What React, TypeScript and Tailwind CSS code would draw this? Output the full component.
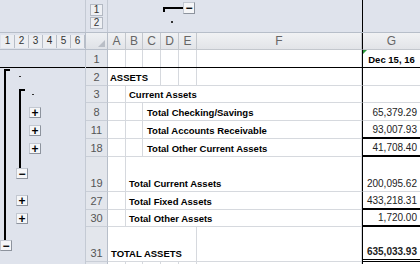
import React from 'react';

type Cell = { w: number; text?: string; cls?: string };
type RowDef = { n: string; h: number; cells: Cell[]; g?: string; gCls?: string; last?: boolean };

const PANE = 'bg-[#dfe3ec]';
const GRID = 'border-[#d6d9de]';

const OutlineBtn: React.FC<{ sign: string; className?: string }> = ({ sign, className }) => (
  <div
    className={`absolute w-[12px] h-[11px] bg-[#f5f6f8] border border-[#c3c8d1] border-r-[#8d939d] border-b-[#8d939d] flex items-center justify-center text-[12px] font-bold leading-none text-black ${className ?? ''}`}
  >
    {sign}
  </div>
);

const rows: RowDef[] = [
  {
    n: '2',
    h: 18,
    cells: [
      { w: 53, text: 'ASSETS', cls: 'pl-[2px]' },
      { w: 18 },
      { w: 18 },
      { w: 165 },
    ],
  },
  {
    n: '3',
    h: 17,
    cells: [{ w: 18 }, { w: 236, text: 'Current Assets', cls: 'pl-[3px]' }],
  },
  {
    n: '8',
    h: 18,
    cells: [{ w: 18 }, { w: 17 }, { w: 219, text: 'Total Checking/Savings', cls: 'pl-[4px]' }],
    g: '65,379.29',
  },
  {
    n: '11',
    h: 18,
    cells: [{ w: 18 }, { w: 17 }, { w: 219, text: 'Total Accounts Receivable', cls: 'pl-[4px]' }],
    g: '93,007.93',
    gCls: 'border-b-2 border-b-black',
  },
  {
    n: '18',
    h: 18,
    cells: [{ w: 18 }, { w: 17 }, { w: 219, text: 'Total Other Current Assets', cls: 'pl-[4px]' }],
    g: '41,708.40',
    gCls: 'border-b-2 border-b-black',
  },
  {
    n: '19',
    h: 35,
    cells: [{ w: 18 }, { w: 236, text: 'Total Current Assets', cls: 'pl-[3px]' }],
    g: '200,095.62',
  },
  {
    n: '27',
    h: 18,
    cells: [{ w: 18 }, { w: 236, text: 'Total Fixed Assets', cls: 'pl-[3px]' }],
    g: '433,218.31',
    gCls: 'border-b-2 border-b-black',
  },
  {
    n: '30',
    h: 17,
    cells: [{ w: 18 }, { w: 236, text: 'Total Other Assets', cls: 'pl-[3px]' }],
    g: '1,720.00',
    gCls: 'border-b-2 border-b-black',
  },
  {
    n: '31',
    h: 35,
    cells: [{ w: 89, text: 'TOTAL ASSETS', cls: 'pl-[3px]' }, { w: 165 }],
    g: '635,033.93',
    gCls: 'border-b-[3px] border-double border-b-black font-bold',
  },
  {
    n: '32',
    h: 12,
    cells: [{ w: 18 }, { w: 17 }, { w: 18 }, { w: 18 }, { w: 18 }, { w: 165 }],
    last: true,
  },
];

const colHeads = [
  { l: 'A', w: 18 },
  { l: 'B', w: 17 },
  { l: 'C', w: 18 },
  { l: 'D', w: 18 },
  { l: 'E', w: 18 },
  { l: 'F', w: 165 },
];

export default function App() {
  return (
    <div className="relative w-[420px] h-[264px] overflow-hidden bg-white font-['Liberation_Sans',Arial,sans-serif] text-black">
      {/* column outline bar */}
      <div className="flex h-[33px] border-b border-[#b7bec9]">
        <div className={`w-[86px] ${PANE} border-r border-[#c4cad4]`} />
        <div className={`w-[22px] ${PANE} border-r border-[#c4cad4] flex flex-col items-center pt-[4px] gap-[1px]`}>
          {['1', '2'].map((l) => (
            <div
              key={l}
              className="w-[13px] h-[12px] bg-[#eef0f4] border border-[#b3b9c3] flex items-center justify-center text-[10px] leading-none text-[#333]"
            >
              {l}
            </div>
          ))}
        </div>
        <div className={`relative w-[254px] ${PANE}`}>
          <div className="absolute left-[55px] top-[7px] w-[20px] h-[2px] bg-black" />
          <div className="absolute left-[55px] top-[7px] w-[2px] h-[5px] bg-black" />
          <OutlineBtn sign="−" className="left-[75px] top-[2px] h-[12px]" />
          <div className="absolute left-[63px] top-[21px] w-[2px] h-[2px] bg-[#333]" />
        </div>
        <div className={`w-[58px] ${PANE} border-l border-black`} />
      </div>

      {/* column headers */}
      <div className="flex h-[17px]">
        <div className={`w-[86px] ${PANE} border-r border-b border-[#b7bec9] flex items-center pl-[1px]`}>
          {['1', '2', '3', '4', '5', '6'].map((l) => (
            <div
              key={l}
              className="w-[14px] h-[13px] bg-[#eceef2] border-r border-[#b8bec8] flex items-center justify-center text-[10px] leading-none text-[#333]"
            >
              {l}
            </div>
          ))}
        </div>
        <div className="relative w-[22px] bg-gradient-to-b from-[#eef0f3] to-[#dfe2e7] border-r border-b border-[#b7bec9]">
          <div className="absolute right-[2px] bottom-[2px] w-0 h-0 border-l-[7px] border-l-transparent border-b-[7px] border-b-[#b9bec6]" />
        </div>
        {colHeads.map((c) => (
          <div
            key={c.l}
            style={{ width: c.w }}
            className="shrink-0 bg-gradient-to-b from-[#f1f2f4] to-[#e2e4e8] border-r border-b border-[#c3c7cd] flex items-center justify-center text-[12px] text-[#666]"
          >
            {c.l}
          </div>
        ))}
        <div className="w-[58px] shrink-0 bg-gradient-to-b from-[#f1f2f4] to-[#e2e4e8] border-l border-b border-black border-b-[#c3c7cd] flex items-center justify-center text-[12px] text-[#666]">
          G
        </div>
      </div>

      {/* body */}
      <div className="flex">
        <div className={`relative w-[86px] shrink-0 ${PANE} border-r border-[#c4cad4]`}>
          <div className="h-[18px] border-b border-black" />
          <div className="absolute left-[4px] top-[19px] w-[2px] h-[171px] bg-black" />
          <div className="absolute left-[4px] top-[19px] w-[6px] h-[2px] bg-black" />
          <div className="absolute left-[19px] top-[26px] w-[2px] h-[1px] bg-[#333]" />
          <div className="absolute left-[19px] top-[39px] w-[2px] h-[79px] bg-black" />
          <div className="absolute left-[19px] top-[39px] w-[6px] h-[2px] bg-black" />
          <div className="absolute left-[32px] top-[44px] w-[2px] h-[1px] bg-[#333]" />
          <OutlineBtn sign="+" className="left-[29px] top-[57px]" />
          <OutlineBtn sign="+" className="left-[29px] top-[75px]" />
          <OutlineBtn sign="+" className="left-[29px] top-[93px]" />
          <OutlineBtn sign="−" className="left-[16px] top-[118px]" />
          <OutlineBtn sign="+" className="left-[16px] top-[145px]" />
          <OutlineBtn sign="+" className="left-[16px] top-[163px]" />
          <OutlineBtn sign="−" className="left-[0px] top-[190px]" />
        </div>

        <div className="flex flex-col">
          {/* row 1 */}
          <div className="flex h-[18px] border-b border-black">
            <div className="w-[22px] shrink-0 bg-[#e3e6ec] border-r border-[#b7bec9] flex items-end justify-center pb-[1px] text-[11px] leading-[13px] text-[#555]">
              1
            </div>
            {[18, 17, 18, 18, 18, 165].map((w, i) => (
              <div key={i} style={{ width: w }} className={`shrink-0 border-r ${GRID}`} />
            ))}
            <div className="relative w-[58px] shrink-0 border-l border-black border-b border-b-black -mb-[1px] flex items-end justify-center pb-[1px] text-[9.5px] leading-[12px] font-bold">
              <div className="absolute left-0 top-0 w-0 h-0 border-t-[4px] border-t-[#2d9a3c] border-r-[4px] border-r-transparent" />
              Dec 15, 16
            </div>
          </div>

          {rows.map((r) => (
            <div key={r.n} style={{ height: r.h }} className="flex shrink-0">
              <div
                className={`w-[22px] shrink-0 bg-[#e3e6ec] border-r border-b border-[#b7bec9] border-b-[#c9ced7] flex items-end justify-center pb-[1px] text-[11px] leading-[13px] text-[#555]`}
              >
                {r.last ? '' : r.n}
              </div>
              {r.cells.map((c, i) => (
                <div
                  key={i}
                  style={{ width: c.w }}
                  className={`shrink-0 border-r border-b ${GRID} flex items-end pb-[1px] text-[9.5px] leading-[12px] font-bold whitespace-nowrap ${c.cls ?? ''}`}
                >
                  {c.text}
                </div>
              ))}
              <div
                className={`w-[58px] shrink-0 border-l border-l-black border-b ${GRID} flex items-end justify-end pr-[3px] pb-[1px] text-[10px] leading-[12px] text-[#222] ${r.gCls ?? ''}`}
              >
                {r.g}
              </div>
            </div>
          ))}
        </div>
      </div>
    </div>
  );
}
